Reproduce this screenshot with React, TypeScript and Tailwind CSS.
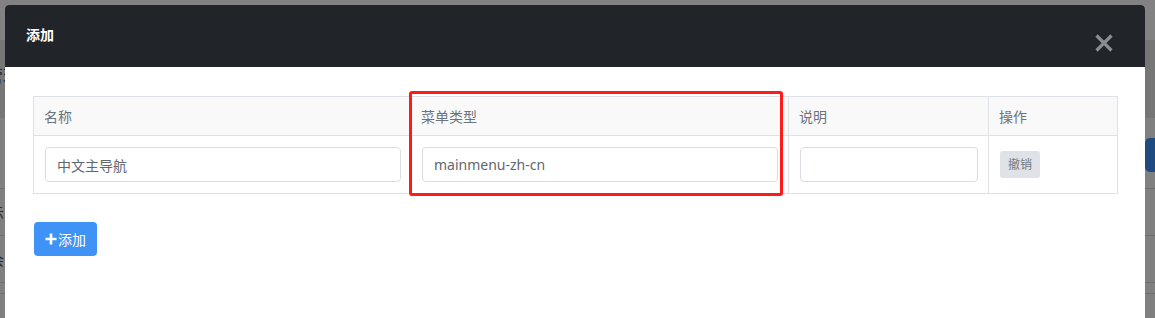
import React from "react";

const font = { fontFamily: '"Noto Sans", "Noto Sans CJK SC", sans-serif' };

const CloseIcon = () => (
  <svg width="20" height="20" viewBox="0 0 20 20" className="text-[#8b8d90]">
    <path d="M2.5 2.5 L17.5 17.5 M17.5 2.5 L2.5 17.5" stroke="currentColor" strokeWidth="3.2" strokeLinecap="butt" />
  </svg>
);

const PlusIcon = () => (
  <svg width="12" height="12" viewBox="0 0 12 12" className="text-white">
    <path d="M6 0.5 V11.5 M0.5 6 H11.5" stroke="currentColor" strokeWidth="2.6" />
  </svg>
);

// dimmed page underneath the modal backdrop
const Backdrop = () => (
  <div className="flex flex-col w-full h-[318px] bg-[#808080]">
    <div className="h-[40px] bg-[#828282]" />
    <div className="h-[78px] bg-[#767676] flex items-center justify-between">
      <span className="text-[17px] leading-none text-[#1e2a3a] -ml-[14px] mt-[-8px]" style={font}>管理</span>
    </div>
    <div className="h-[70px] flex items-start justify-end pt-[20px]">
      <div className="w-[20px] h-[34px] rounded-[5px] bg-[#1f4b80] -mr-[10px]" />
    </div>
    <div className="h-[47px] border-t border-[#6e6e6e] flex items-center">
      <span className="text-[14px] text-[#2a2a2a] -ml-[10px]" style={font}>示</span>
    </div>
    <div className="h-[47px] border-t border-[#6e6e6e] flex items-center">
      <span className="text-[14px] text-[#2a2a2a] -ml-[10px]" style={font}>会</span>
    </div>
    <div className="h-[11px] border-t border-[#6e6e6e]" />
    <div className="flex-1 border-t border-[#6e6e6e]" />
  </div>
);

const TextInput = ({ value }: { value: string }) => (
  <input
    readOnly
    value={value}
    className="block w-full h-[35px] px-[11px] rounded-[4px] border border-[#dadde1] bg-white text-[14px] text-[#62676d] outline-none"
    style={font}
  />
);

export default function App() {
  return (
    <div className="relative w-[1155px] h-[318px] overflow-hidden" style={font}>
      <Backdrop />

      {/* modal */}
      <div className="absolute left-[5px] top-[5px] w-[1140px] h-[340px] bg-white rounded-t-[4px] overflow-hidden">
        <div className="h-[62px] bg-[#212529] flex items-center justify-between pl-[21px] pr-[31px]">
          <h5 className="text-white text-[14px] font-bold leading-none mt-[-2px]">添加</h5>
          <button className="mt-[14px]"><CloseIcon /></button>
        </div>

        <div className="relative px-[28px] pt-[29px]">
          <table className="table-fixed border-collapse w-[1084px] text-[14px]">
            <colgroup>
              <col className="w-[377px]" />
              <col className="w-[378px]" />
              <col className="w-[200px]" />
              <col className="w-[129px]" />
            </colgroup>
            <thead>
              <tr className="h-[39px] bg-[#f9f9f9]">
                {["名称", "菜单类型", "说明", "操作"].map((h) => (
                  <th key={h} className="border border-[#dee2e6] px-[10px] text-left font-normal text-[#6c737a]">
                    {h}
                  </th>
                ))}
              </tr>
            </thead>
            <tbody>
              <tr className="h-[58px]">
                <td className="border border-[#dee2e6] pl-[11px] pr-[9px] pt-[11px] pb-[11px]">
                  <TextInput value="中文主导航" />
                </td>
                <td className="border border-[#dee2e6] pl-[11px] pr-[10px] pt-[11px] pb-[11px]">
                  <TextInput value="mainmenu-zh-cn" />
                </td>
                <td className="border border-[#dee2e6] pl-[11px] pr-[10px] pt-[11px] pb-[11px]">
                  <TextInput value="" />
                </td>
                <td className="border border-[#dee2e6] pl-[11px] align-middle">
                  <button className="h-[27px] w-[40px] rounded-[3px] bg-[#dfe2e6] text-[12px] text-[#737a81]">撤销</button>
                </td>
              </tr>
            </tbody>
          </table>

          {/* highlight annotation */}
          <div className="absolute left-[404px] top-[24px] w-[374px] h-[105px] border-[3px] border-[#ff1a1a] rounded-[3px] pointer-events-none" />

          <button className="mt-[28px] ml-[1px] h-[34px] w-[63px] rounded-[4px] bg-[#3f92f6] text-white text-[14px] flex items-center justify-center gap-[1px]">
            <PlusIcon />
            <span>添加</span>
          </button>
        </div>
      </div>
    </div>
  );
}
